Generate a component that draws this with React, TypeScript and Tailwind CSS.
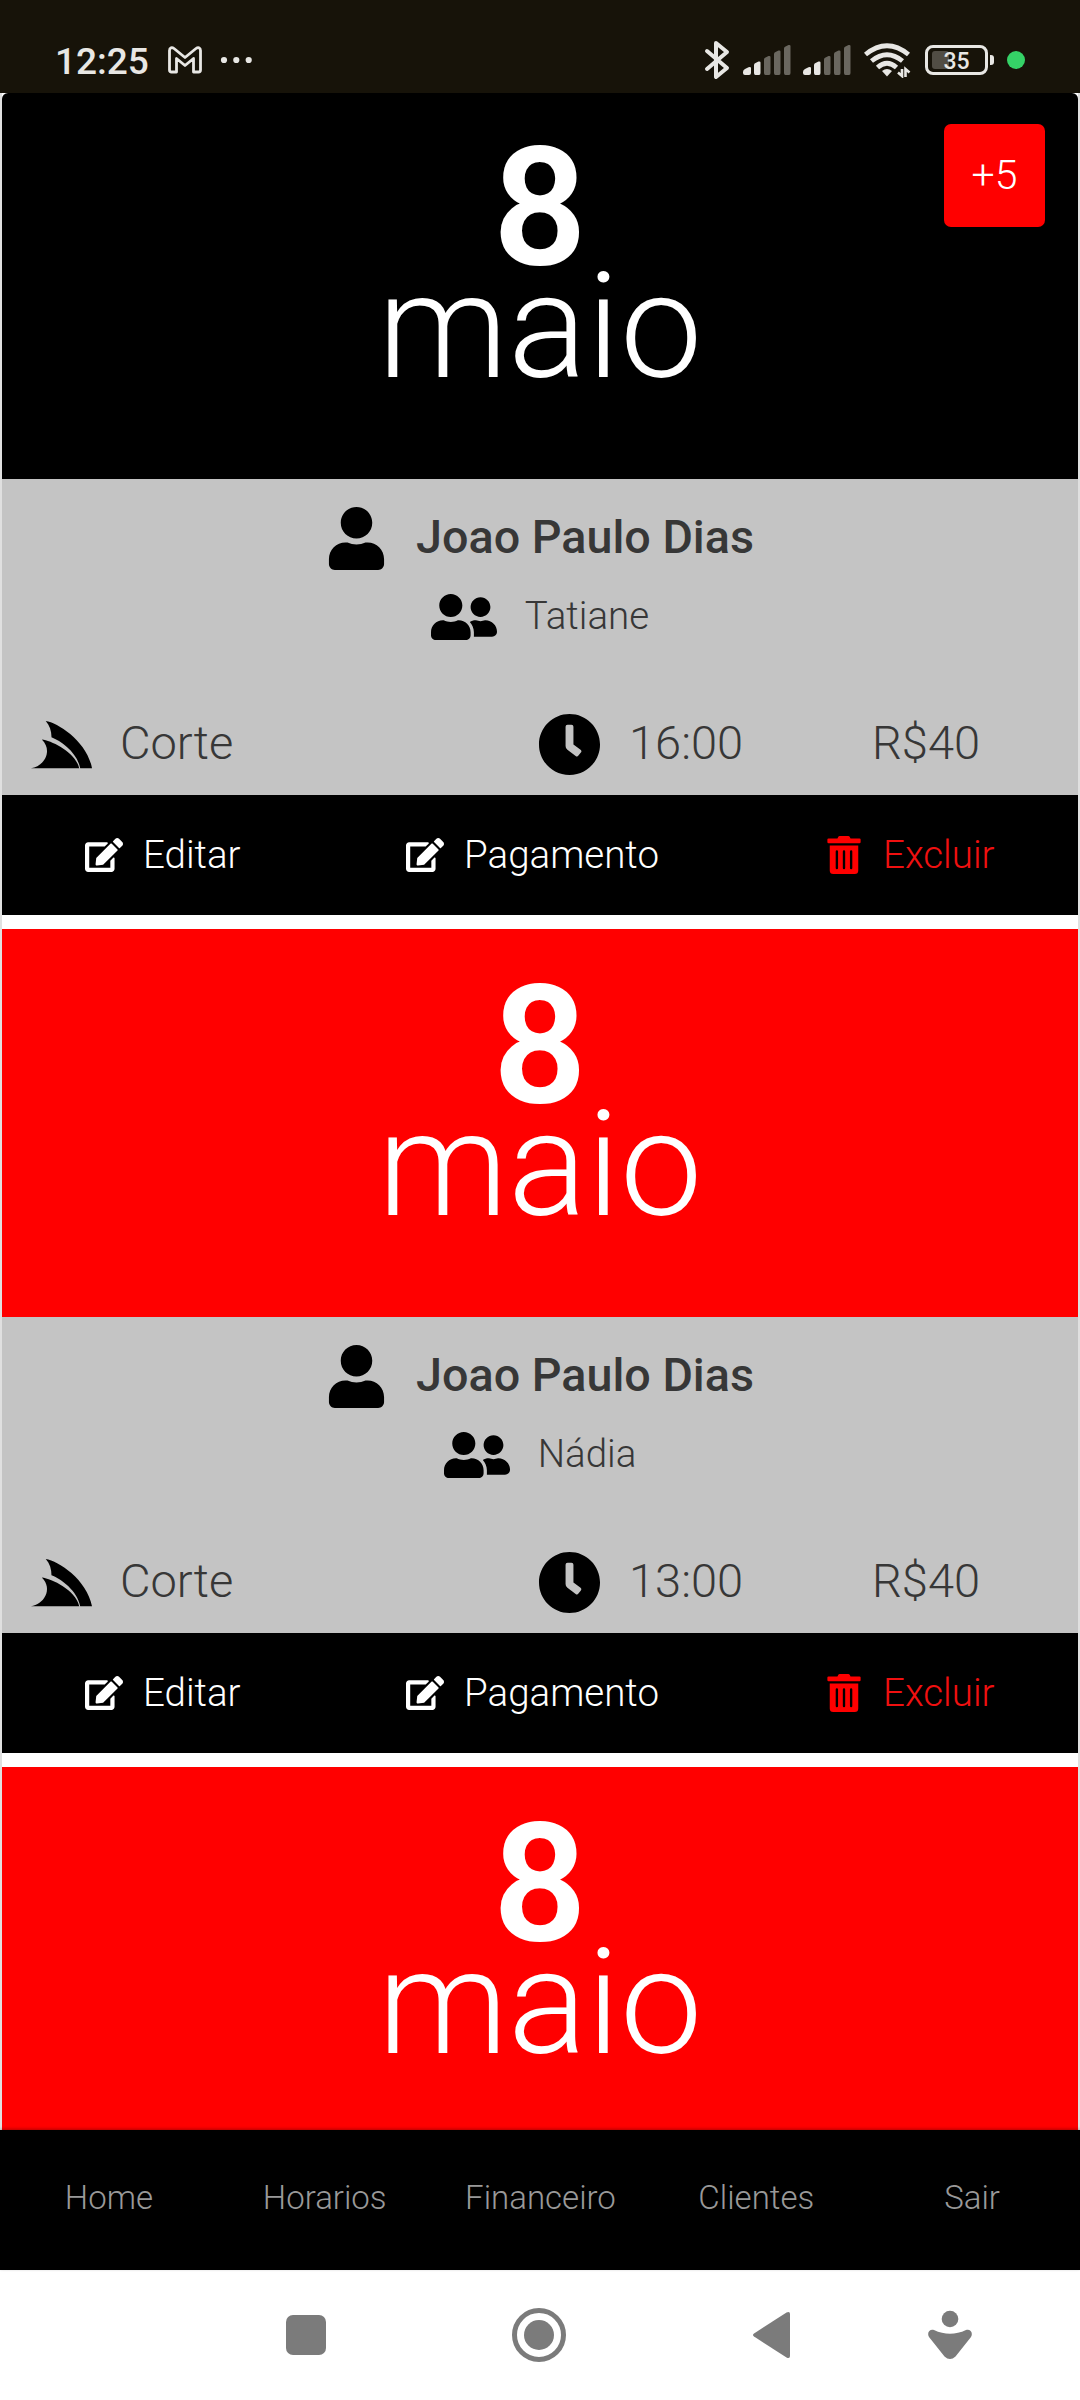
import { FaUser, FaUserFriends, FaClock, FaEdit, FaTrashAlt, FaServicestack } from "react-icons/fa";

const appointments = [
    { id: 1, client: "Joao Paulo Dias", worker: "Tatiane", service: "Corte", time: "16:00", price: "R$40" },
    { id: 2, client: "Joao Paulo Dias", worker: "Nádia", service: "Corte", time: "13:00", price: "R$40" }
];

const tabs = ["Home", "Horarios", "Financeiro", "Clientes", "Sair"];

function Signal() {
    return (
        <svg width="50" height="32" viewBox="0 0 50 32">
            <path d="M0 29V28Q0 26 2 25L5.500 23.200Q8 22.500 8 24V29Q8 31 6 31H2Q0 31 0 29Z" fill="#e8e7e4" />
            <path d="M11 21Q11 19.500 12.500 19L15.500 17.500Q17.500 17 17.500 18.500V29Q17.500 31 16 31H12.500Q11 31 11 29Z" fill="#e8e7e4" />
            <path d="M21 15.500Q21 14 22.500 13.500L25.500 12Q27.500 11.500 27.500 13V29Q27.500 31 26 31H22.500Q21 31 21 29Z" fill="#6a675f" />
            <path d="M31 10Q31 8.500 32.500 8L35.500 6.500Q37.500 6 37.500 7.500V29Q37.500 31 36 31H32.500Q31 31 31 29Z" fill="#6a675f" />
            <path d="M41 4.500Q41 3 42.500 2.500L45.500 1Q47.500 .5 47.500 2V29Q47.500 31 46 31H42.500Q41 31 41 29Z" fill="#6a675f" />
        </svg>
    );
}

function StatusBar() {
    return (
        <div className="flex h-[93px] shrink-0 items-center bg-[#171309] pl-[55px] pt-[27px] text-[#e8e7e4]">
            <span className="mt-[3px] w-[113px] text-[37px] font-medium leading-none">12:25</span>
            <svg className="mt-[-1px]" width="34" height="28" viewBox="0 0 34 28" fill="none" stroke="currentColor" strokeWidth="2.800" strokeLinejoin="round">
                <path d="M1.500 24V4.500C1.500 1.500 4 1 6 2.500L17 11.500L28 2.500C30 1 32.500 1.500 32.500 4.500V24Q32.500 26 30.500 26H25.500V12.500L17 19.500L8.500 12.500V26H3.500Q1.500 26 1.500 24Z" />
            </svg>
            <svg className="ml-[18px]" width="34" height="8" viewBox="0 0 34 8" fill="currentColor">
                <circle cx="4" cy="4" r="3.100" />
                <circle cx="16.300" cy="4" r="3.100" />
                <circle cx="28.700" cy="4" r="3.100" />
            </svg>
            <svg className="ml-[450px]" width="26" height="40" viewBox="0 0 26 40" fill="none" stroke="currentColor" strokeWidth="4" strokeLinecap="round" strokeLinejoin="round">
                <path d="M3 11L23 28L12 37V3L23 12L3 29" />
            </svg>
            <div className="ml-[13px] flex gap-[10px]">
                <Signal />
                <Signal />
            </div>
            <svg className="ml-[11px]" width="48" height="36" viewBox="0 0 48 36" fill="none" stroke="currentColor" strokeWidth="4.800">
                <path d="M1.500 12.500Q23 -5 44.500 12.500" />
                <path d="M7.500 19Q23 6.500 38.500 19" />
                <path d="M13.500 25.500Q23 17 32.500 25.500" />
                <path d="M18 29Q23 25 28 29L23 34.500Z" fill="currentColor" stroke="none" />
                <path d="M38 27V34L34 30.500M41.500 35V27L45.500 30.500" strokeWidth="2.600" />
            </svg>
            <div className="relative ml-[13px] flex h-[30px] w-[63px] items-center justify-center rounded-[8px] border-[3px] border-[#e8e7e4]">
                <div className="absolute left-[4px] top-[3px] h-[18px] w-[17px] rounded-[3px] bg-[#514d44]" />
                <span className="relative pt-[2px] text-[23px] font-medium leading-none">35</span>
            </div>
            <div className="ml-[2px] h-[10px] w-[4px] rounded-r-[3px] bg-[#e8e7e4]" />
            <div className="ml-[13px] size-[18px] rounded-full bg-[#35d267]" />
        </div>
    );
}

function DateHeader({ day, month }: { day: string; month: string }) {
    return (
        <div className="h-[388px] shrink-0 bg-[#ff0000] pt-[52px] text-center text-white">
            <p className="text-[165px] font-[560] leading-[130px]">{day}</p>
            <p className="text-[147px] font-[325] leading-[108px]">{month}</p>
        </div>
    );
}

// the first card is black and carries the badge with the remaining bookings
function NextDateHeader({ day, month, badge }: { day: string; month: string; badge: string }) {
    return (
        <div className="relative h-[386px] shrink-0 rounded-t-[6px] bg-black pt-[50px] text-center text-white">
            <p className="text-[165px] font-[560] leading-[130px]">{day}</p>
            <p className="text-[147px] font-[325] leading-[108px]">{month}</p>
            <div className="absolute right-[33px] top-[31px] flex h-[103px] w-[101px] items-center justify-center rounded-[7px] bg-[#ff0000] text-[41px] font-light">
                {badge}
            </div>
        </div>
    );
}

function CardBody({ item }: { item: (typeof appointments)[number] }) {
    return (
        <div className="mb-[14px] shrink-0">
            {/* Details */}
            <div className="flex h-[316px] flex-col bg-[#c4c4c4] pt-[28px] text-[#373737]">
                <div className="flex h-[63px] items-center justify-center gap-[28px]">
                    <FaUser className="ml-[-1px] size-[63px] text-black" />
                    <span className="pb-[3px] text-[46.700px] font-medium leading-none">{item.client}</span>
                </div>
                <div className="mt-[14px] flex h-[66px] items-center justify-center gap-[28px]">
                    <FaUserFriends className="size-[66px] text-black" />
                    <span className="pb-[1px] text-[38.500px] font-light leading-none">{item.worker}</span>
                </div>
                <div className="mt-[61px] flex h-[66px] items-center pl-[28px] text-[47px] font-light leading-none">
                    <FaServicestack className="size-[63px] text-black" />
                    <span className="ml-[27px] w-[418px] pb-[3px]">{item.service}</span>
                    <FaClock className="size-[63px] text-black" />
                    <span className="ml-[28px] w-[243px] pb-[3px]">{item.time}</span>
                    <span className="pb-[3px]">{item.price}</span>
                </div>
            </div>

            {/* Actions */}
            <div className="flex h-[120px] items-center bg-black pl-[83px] text-[38.500px] font-light leading-none text-white">
                <FaEdit className="size-[38px]" />
                <span className="ml-[20px] w-[263px]">Editar</span>
                <FaEdit className="size-[38px]" />
                <span className="ml-[20px] w-[361px]">Pagamento</span>
                <FaTrashAlt className="size-[38px] text-[#ff0000]" />
                <span className="ml-[20px] text-[#f01010]">Excluir</span>
            </div>
        </div>
    );
}

function SystemNav() {
    return (
        <div className="flex h-[130px] shrink-0 items-center bg-white pl-[286px] text-[#7b7b7b]">
            <div className="size-[40px] rounded-[7px] bg-[#7b7b7b]" />
            <div className="ml-[186px] flex size-[54px] items-center justify-center rounded-full border-[5px] border-[#7b7b7b]">
                <div className="size-[30px] rounded-full bg-[#7b7b7b]" />
            </div>
            <svg className="ml-[186px]" width="39" height="48" viewBox="0 0 39 48" fill="currentColor">
                <path d="M2 22.500L34.500 1.500Q38 0 38 3V45Q38 48 34.500 46.500L2 25.500Q0 24 2 22.500Z" />
            </svg>
            <svg className="ml-[136px]" width="46" height="50" viewBox="0 0 46 50" fill="currentColor">
                <circle cx="23" cy="9" r="8.300" />
                <path d="M7 20Q23 27.500 39 20C43 18.500 46.500 22.500 44 27L28.500 46.500Q23 51.500 17.500 46.500L2 27C-.5 22.500 3 18.500 7 20Z" />
            </svg>
        </div>
    );
}

export default function App() {
    return (
        <div className="flex h-[2400px] w-[1080px] flex-col overflow-hidden bg-white font-['Roboto',sans-serif]">
            <StatusBar />

            <main className="flex min-h-0 flex-1 flex-col overflow-hidden border-x-2 border-[#e0e0e0] bg-white">
                <NextDateHeader day="8" month="maio" badge="+5" />
                <CardBody item={appointments[0]} />
                <DateHeader day="8" month="maio" />
                <CardBody item={appointments[1]} />
                <DateHeader day="8" month="maio" />
            </main>

            <nav className="relative grid h-[140px] shrink-0 grid-cols-5 items-center bg-black pb-[5px] pl-[1px] text-center text-[33px] font-light text-[#999999] shadow-[0_-1px_3px_rgba(0,0,0,0.3)]">
                {tabs.map((tab) => (
                    <span key={tab}>{tab}</span>
                ))}
            </nav>

            <SystemNav />
        </div>
    );
}
